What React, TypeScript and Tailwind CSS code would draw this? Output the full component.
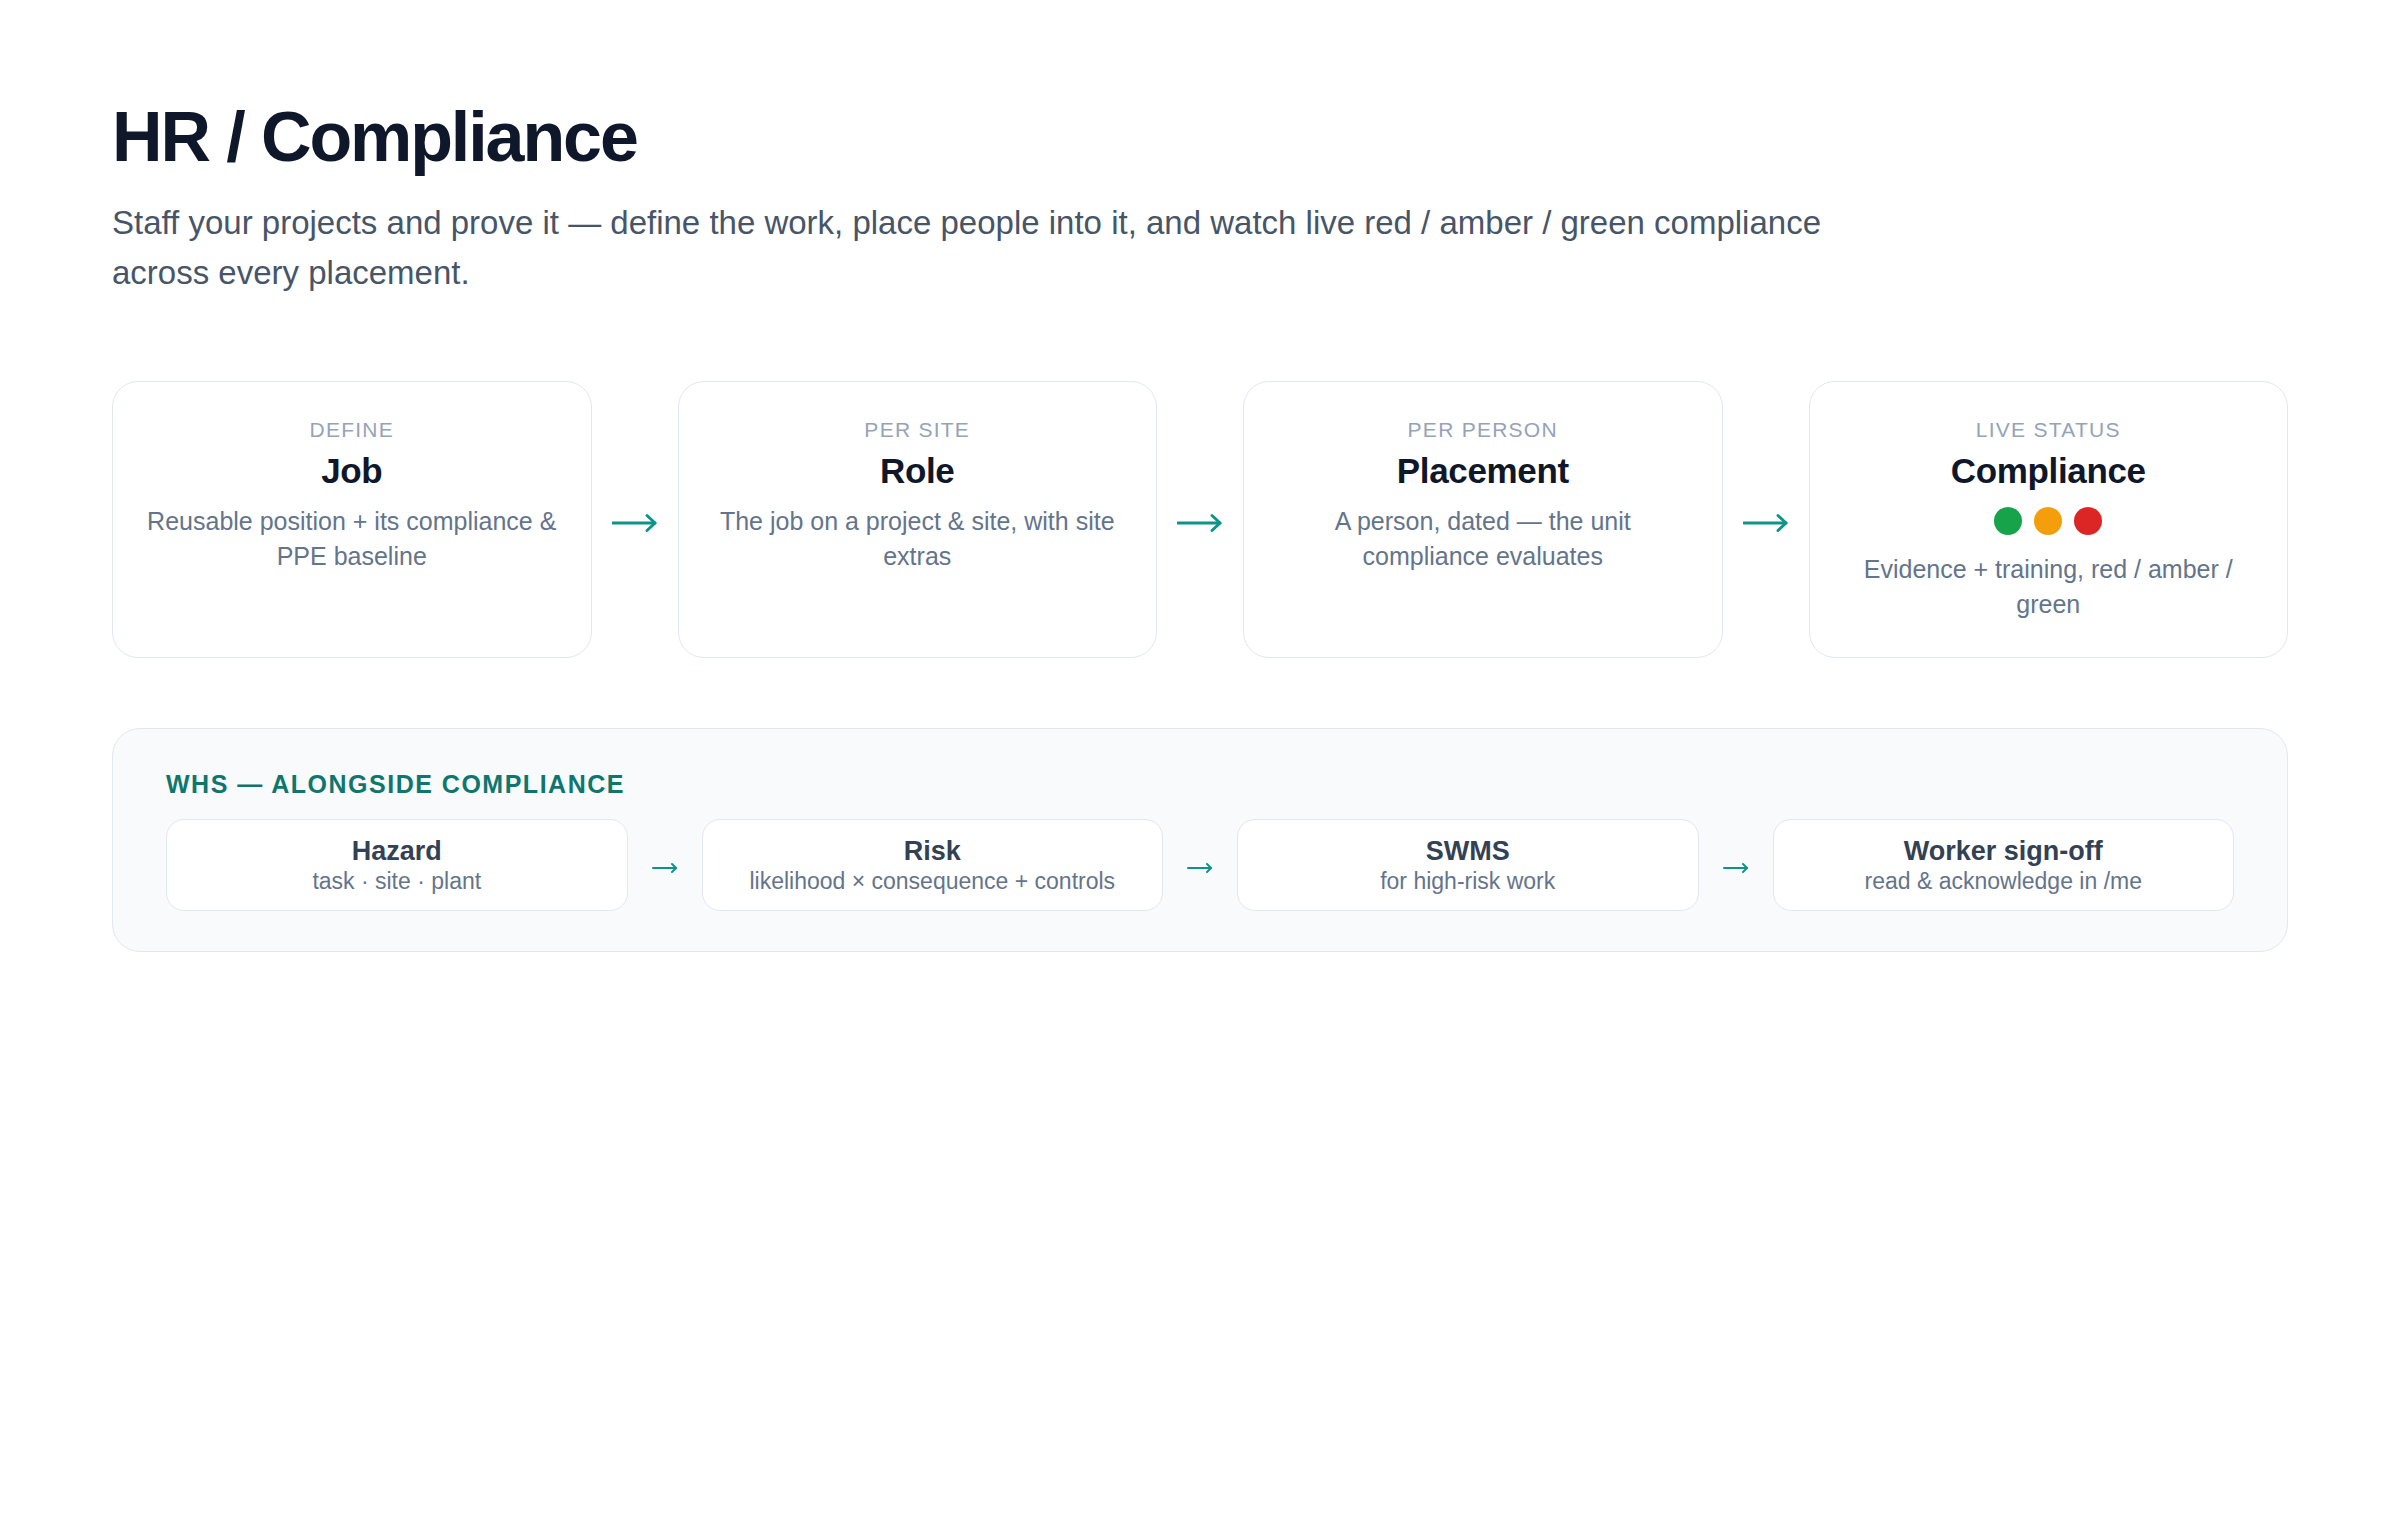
import { Fragment } from "react";

type Stage = {
  eyebrow: string;
  title: string;
  body: string;
  lights?: boolean;
};

const stages: Stage[] = [
  { eyebrow: "Define", title: "Job", body: "Reusable position + its compliance & PPE baseline" },
  { eyebrow: "Per site", title: "Role", body: "The job on a project & site, with site extras" },
  { eyebrow: "Per person", title: "Placement", body: "A person, dated — the unit compliance evaluates" },
  { eyebrow: "Live status", title: "Compliance", body: "Evidence + training, red / amber / green", lights: true }
];

const whsSteps = [
  { title: "Hazard", sub: "task · site · plant" },
  { title: "Risk", sub: "likelihood × consequence + controls" },
  { title: "SWMS", sub: "for high-risk work" },
  { title: "Worker sign-off", sub: "read & acknowledge in /me" }
];

function BigArrow() {
  return (
    <svg width="46" height="20" viewBox="0 0 46 20" fill="none" className="text-[#0d9488]">
      <path d="M1 10h42" stroke="currentColor" strokeWidth="3" strokeLinecap="round" />
      <path d="M35 2.5l8 7.5-8 7.5" stroke="currentColor" strokeWidth="3" strokeLinecap="round" strokeLinejoin="round" />
    </svg>
  );
}

function SmallArrow() {
  return (
    <svg width="26" height="12" viewBox="0 0 26 12" fill="none" className="text-[#0d9488]">
      <path d="M1 6h23" stroke="currentColor" strokeWidth="2" strokeLinecap="round" />
      <path d="M20 2l4 4-4 4" stroke="currentColor" strokeWidth="2" strokeLinecap="round" strokeLinejoin="round" />
    </svg>
  );
}

function StageCard({ stage }: { stage: Stage }) {
  return (
    <div className="flex flex-1 flex-col items-center rounded-[26px] border-[1.5px] border-[#e2e8f0] bg-white px-7 pb-[36px] pt-[34px] text-center">
      <div className="text-[21px] uppercase leading-[28px] tracking-[0.06em] text-[#94a3b8]">{stage.eyebrow}</div>
      <div className="mt-[7px] text-[35px] font-bold leading-[40px] tracking-[-0.01em] text-[#0f172a]">{stage.title}</div>
      {stage.lights ? (
        <div className="mt-[16px] flex gap-3">
          <span className="h-7 w-7 rounded-full bg-[#16a34a]" />
          <span className="h-7 w-7 rounded-full bg-[#f59e0b]" />
          <span className="h-7 w-7 rounded-full bg-[#dc2626]" />
        </div>
      ) : null}
      <p className={`${stage.lights ? "mt-[17px]" : "mt-[13px]"} text-[25px] leading-[34.5px] text-[#64748b]`}>
        {stage.body}
      </p>
    </div>
  );
}

export default function App() {
  return (
    <div className="min-h-screen bg-white px-[112px] pt-[102px] font-['Liberation_Sans',Arial,sans-serif]">
      <h1 className="text-[70px] font-bold leading-[70px] tracking-[-0.03em] text-[#0f172a]">HR / Compliance</h1>
      <p className="mt-[26px] max-w-[1800px] text-[33px] leading-[50px] text-[#475569]">
        Staff your projects and prove it — define the work, place people into it, and watch live red / amber / green
        compliance across every placement.
      </p>

      <div className="mt-[83px] flex items-stretch">
        {stages.map((stage, index) => (
          <Fragment key={stage.title}>
            {index > 0 ? (
              <div className="flex w-[86px] shrink-0 items-center justify-center pt-[7px]">
                <BigArrow />
              </div>
            ) : null}
            <StageCard stage={stage} />
          </Fragment>
        ))}
      </div>

      <section className="mt-[70px] rounded-[28px] border-[1.5px] border-[#e2e8f0] bg-[#f8fafc] px-[53px] pb-[40px] pt-[40px]">
        <h2 className="text-[25px] font-bold uppercase leading-[30px] tracking-[0.06em] text-[#0f766e]">
          WHS — Alongside compliance
        </h2>
        <div className="mt-[20px] flex items-stretch">
          {whsSteps.map((step, index) => (
            <Fragment key={step.title}>
              {index > 0 ? (
                <div className="flex w-[74px] shrink-0 items-center justify-center pt-[6px]">
                  <SmallArrow />
                </div>
              ) : null}
              <div className="flex flex-1 flex-col items-center rounded-[18px] border-[1.5px] border-[#e2e8f0] bg-white py-[15px] text-center">
                <div className="text-[27px] font-bold leading-[32px] text-[#334155]">{step.title}</div>
                <div className="text-[23px] leading-[28px] text-[#64748b]">{step.sub}</div>
              </div>
            </Fragment>
          ))}
        </div>
      </section>
    </div>
  );
}
